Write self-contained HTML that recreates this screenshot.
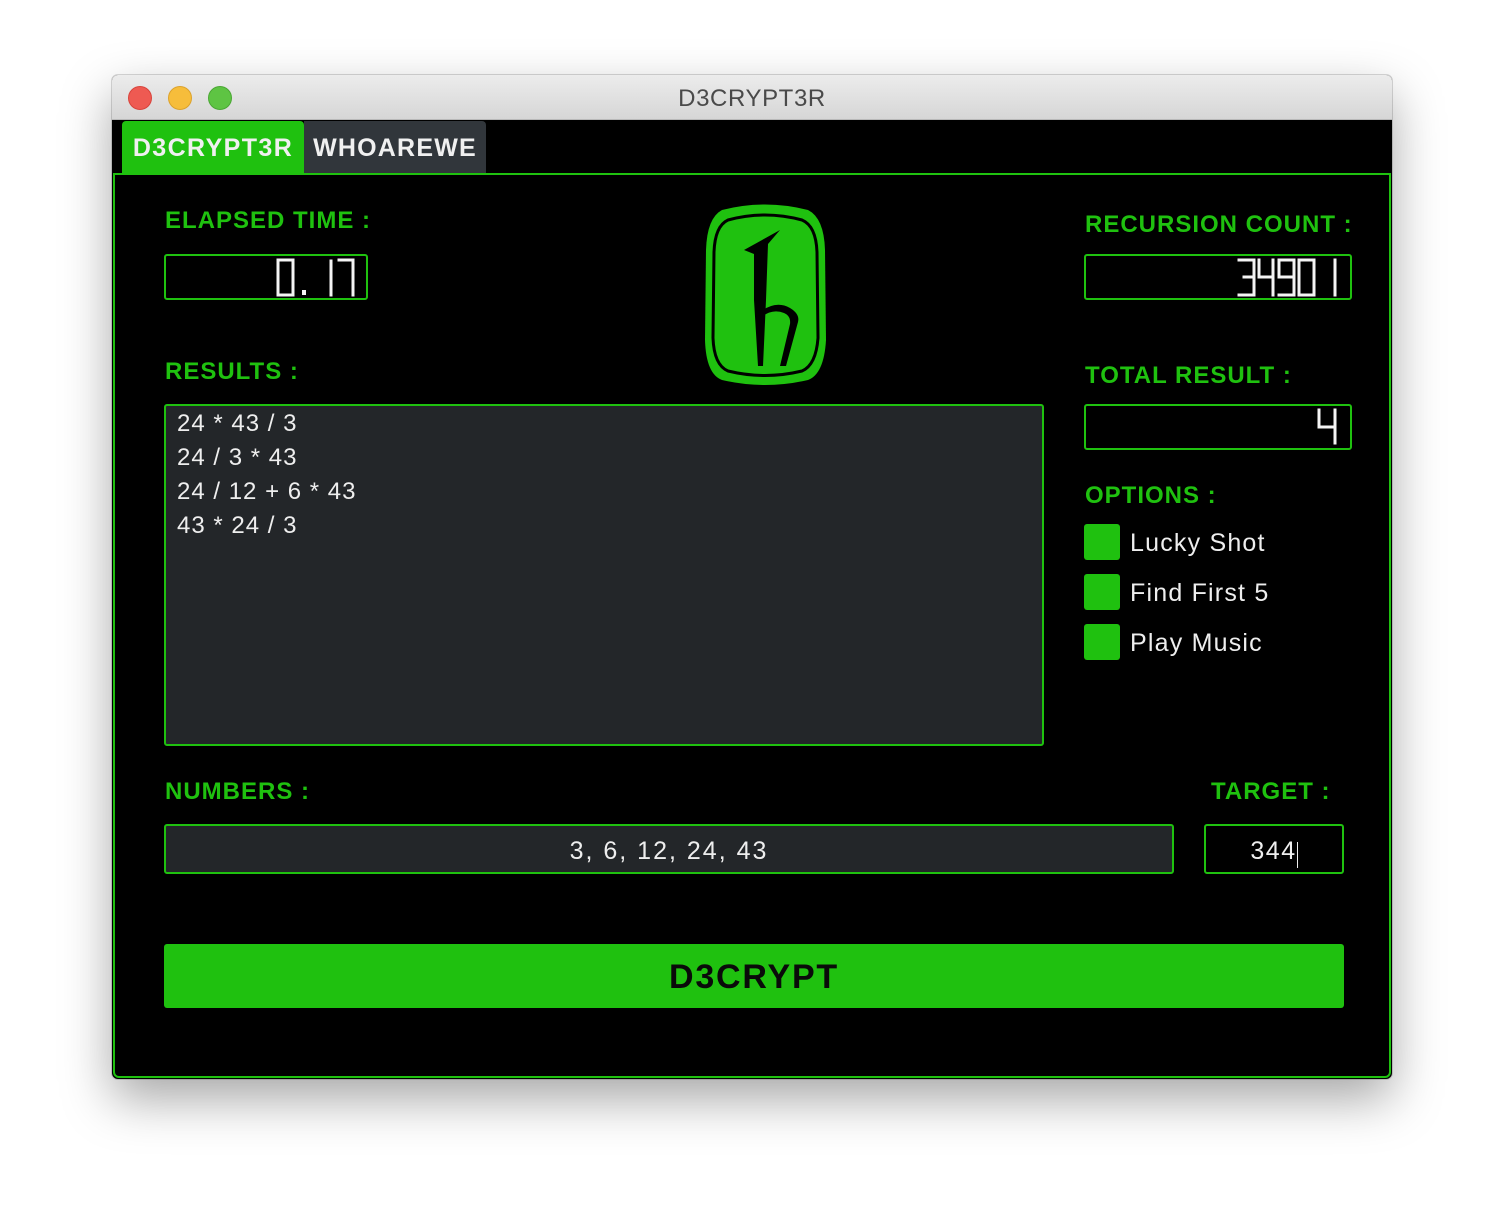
<!DOCTYPE html>
<html><head><style>
*{margin:0;padding:0;box-sizing:border-box}
body{width:1504px;height:1228px;background:#fff;position:relative;overflow:hidden;font-family:"Liberation Sans",sans-serif}
.a{position:absolute}
.win{left:112px;top:75px;width:1280px;height:1004px;border-radius:6px;background:#000;box-shadow:0 20px 50px rgba(0,0,0,.35),0 0 0 1px rgba(0,0,0,.15);overflow:hidden}
.title{left:0;top:0;width:1280px;height:45px;background:linear-gradient(#ececec,#d6d6d6);border-bottom:1px solid #b8b8b8;text-align:center;font-size:24px;line-height:48px;color:#4a4a4a;letter-spacing:0.6px}
.dot{top:11px;width:24px;height:24px;border-radius:50%}
.lbl{color:#1fc10f;font-weight:bold;font-size:24px;letter-spacing:1px}
.box{border:2px solid #1fc10f;border-radius:3px}
.txt{color:#eee;font-size:24px;letter-spacing:1px}
.cb{left:972px;width:36px;height:36px;background:#1fc10f;border-radius:3px}
</style></head><body>
<div class="a win">
 <div class="a title">D3CRYPT3R</div>
 <div class="a dot" style="left:16px;background:#ee5a52;border:1px solid #d8443c"></div>
 <div class="a dot" style="left:56px;background:#f6bd3b;border:1px solid #dca22c"></div>
 <div class="a dot" style="left:96px;background:#5ec443;border:1px solid #4aa734"></div>
 <div class="a" style="left:10px;top:46px;width:182px;height:52px;background:#1fc10f;border-radius:4px 4px 0 0;color:#f0f0f0;font-weight:bold;font-size:25px;line-height:54px;text-align:center;letter-spacing:1.4px">D3CRYPT3R</div>
 <div class="a" style="left:192px;top:46px;width:182px;height:52px;background:#31363b;border-radius:0 4px 0 0;color:#f0f0f0;font-weight:bold;font-size:25px;line-height:54px;text-align:center;letter-spacing:1.2px">WHOAREWE</div>
 <div class="a" style="left:1px;top:98px;width:1278px;height:905px;border:2px solid #1fc10f;border-radius:0 0 6px 6px"></div>
</div>

<div class="a lbl" style="left:165px;top:207px">ELAPSED TIME :</div>
<div class="a box" style="left:164px;top:254px;width:204px;height:46px"></div>
<div class="a lbl" style="left:1085px;top:211px">RECURSION COUNT :</div>
<div class="a box" style="left:1084px;top:254px;width:268px;height:46px"></div>
<div class="a lbl" style="left:165px;top:358px">RESULTS :</div>
<div class="a lbl" style="left:1085px;top:362px">TOTAL RESULT :</div>
<div class="a box" style="left:1084px;top:404px;width:268px;height:46px"></div>
<div class="a lbl" style="left:1085px;top:482px">OPTIONS :</div>

<div class="a box" style="left:164px;top:404px;width:880px;height:342px;background:#232629;padding:1px 11px">
 <div class="txt" style="line-height:34px">24 * 43 / 3<br>24 / 3 * 43<br>24 / 12 + 6 * 43<br>43 * 24 / 3</div>
</div>

<div class="a cb" style="left:1084px;top:524px"></div>
<div class="a txt" style="left:1130px;top:529px;font-size:25px;letter-spacing:1.2px">Lucky Shot</div>
<div class="a cb" style="left:1084px;top:574px"></div>
<div class="a txt" style="left:1130px;top:579px;font-size:25px;letter-spacing:1.2px">Find First 5</div>
<div class="a cb" style="left:1084px;top:624px"></div>
<div class="a txt" style="left:1130px;top:629px;font-size:25px;letter-spacing:1.2px">Play Music</div>

<div class="a lbl" style="left:165px;top:778px">NUMBERS :</div>
<div class="a lbl" style="left:1211px;top:778px">TARGET :</div>
<div class="a box" style="left:164px;top:824px;width:1010px;height:50px;background:#232629;text-align:center;line-height:50px"><span class="txt" style="letter-spacing:2px;font-size:25px">3, 6, 12, 24, 43</span></div>
<div class="a box" style="left:1204px;top:824px;width:140px;height:50px;background:#000;text-align:center;line-height:50px"><span class="txt" style="font-size:25px;letter-spacing:1.5px">344</span><span style="display:inline-block;width:1px;height:26px;background:#eee;vertical-align:middle"></span></div>

<div class="a" style="left:164px;top:944px;width:1180px;height:64px;background:#1fc10f;border-radius:3px;text-align:center;line-height:66px;font-weight:bold;font-size:34px;color:#0a0a0a;letter-spacing:1.8px">D3CRYPT</div>

<svg class="a" style="left:0;top:0" width="1504" height="1228" fill="none" stroke="#f4f4f4" stroke-width="3" stroke-linecap="square">
 <path d="M278 260H293V295H278Z"/>
 <rect x="302" y="290" width="4" height="5" fill="#f4f4f4" stroke="none"/>
 <path d="M331 261V295"/>
 <path d="M339 260H353V295"/>
 <path d="M1239 260H1254V295H1239M1244 277H1254"/>
 <path d="M1259 260V277H1273M1273 260V295"/>
 <path d="M1294 277H1279V260H1294V295H1279"/>
 <path d="M1299 260H1314V295H1299Z"/>
 <path d="M1335 260V295"/>
 <path d="M1319 410V427H1335M1335 410V443"/>
</svg>

<svg class="a" style="left:700px;top:200px" width="130" height="190" viewBox="0 0 130 190">
 <path d="M22 10 Q65 -1 108 10 Q124 18 125 50 L126 140 Q124 174 108 180 Q65 190 22 180 Q6 174 5 140 L6 50 Q7 18 22 10Z" fill="#1fc10f"/>
 <path d="M28 20 Q65 10 102 20 Q116 26 117 52 L118 138 Q116 165 102 171 Q65 180 28 171 Q14 165 13 138 L14 52 Q15 26 28 20Z" fill="none" stroke="#000" stroke-width="3"/>
 <path d="M44 50 L80 30 L68 44 L66 100 L63 166 L58 166 L54 100 L54 54 Z" fill="#000"/>
 <path d="M60 112 Q76 100 90 108 Q100 114 98 122 L86 166 L80 166 L90 124 Q91 116 84 113 Q72 108 60 118Z" fill="#000"/>
</svg>
</body></html>
